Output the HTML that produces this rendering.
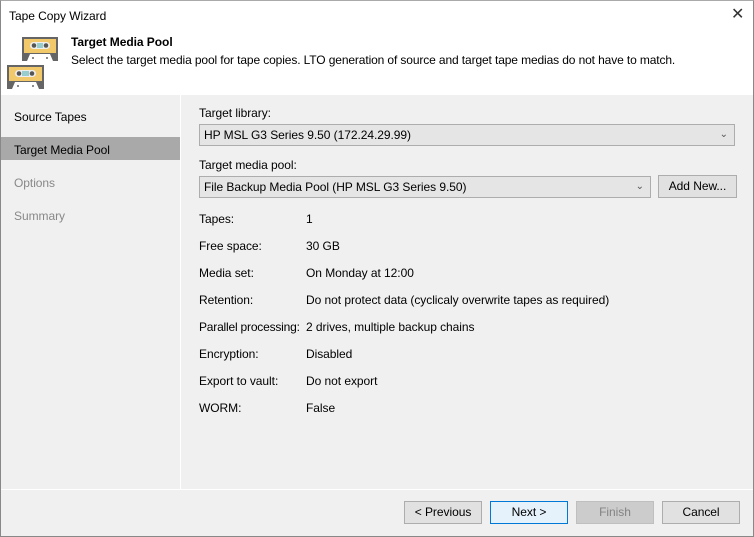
<!DOCTYPE html>
<html><head><style>
*{box-sizing:border-box;margin:0;padding:0}
body{width:754px;height:537px;font-family:"Liberation Sans",sans-serif;font-size:12px;letter-spacing:-0.05px;color:#000;background:#f0f0f0;position:relative;overflow:hidden}
.abs{position:absolute}
.win{left:0;top:0;width:754px;height:537px;border:1px solid #888;border-top:1px solid #aaa}
.combo{background:#e5e5e5;border:1px solid #adadad;height:22px;line-height:20px;padding-left:4px}
.combo .ar{position:absolute;right:6px;top:0;color:#555;font-size:10px}
.btn{background:#e1e1e1;border:1px solid #adadad;height:23px;width:78px;text-align:center;line-height:21px}
.lbl{left:199px}
.val{left:306px}
</style></head><body>
<div class="abs" style="left:0;top:0;width:754px;height:95px;background:#fff"></div>
<div class="abs" style="left:9px;top:9px">Tape Copy Wizard</div>
<div class="abs" style="left:731px;top:4px;font-size:16px;color:#333;font-weight:normal">✕</div>
<svg class="abs" style="left:22px;top:37px" width="36" height="25"><rect x="0" y="0" width="36" height="24" fill="#656565"/><rect x="2" y="2" width="32" height="14" fill="#f2c96a"/><rect x="8" y="5" width="20" height="7" rx="3.5" fill="#eee"/><circle cx="12" cy="8.5" r="2.3" fill="#555"/><circle cx="24" cy="8.5" r="2.3" fill="#555"/><rect x="15" y="6" width="6" height="5" fill="#9cc"/><polygon points="5,24 8,17 28,17 31,24" fill="#fff"/><circle cx="11" cy="21" r="1" fill="#666"/><circle cx="25" cy="21" r="1" fill="#666"/></svg>
<svg class="abs" style="left:7px;top:65px" width="37" height="25"><rect x="0" y="0" width="37" height="24" fill="#656565"/><rect x="2" y="2" width="33" height="14" fill="#f2c96a"/><rect x="8" y="5" width="21" height="7" rx="3.5" fill="#eee"/><circle cx="12" cy="8.5" r="2.3" fill="#555"/><circle cx="25" cy="8.5" r="2.3" fill="#555"/><rect x="15" y="6" width="7" height="5" fill="#9cc"/><polygon points="5,24 8,17 29,17 32,24" fill="#fff"/><circle cx="11" cy="21" r="1" fill="#666"/><circle cx="26" cy="21" r="1" fill="#666"/></svg>
<div class="abs" style="left:71px;top:35px;font-weight:bold">Target Media Pool</div>
<div class="abs" style="left:71px;top:53px;letter-spacing:-0.12px">Select the target media pool for tape copies. LTO generation of source and target tape medias do not have to match.</div>
<div class="abs" style="left:180px;top:95px;width:1px;height:394px;background:#fff"></div>
<div class="abs" style="left:14px;top:110px">Source Tapes</div>
<div class="abs" style="left:0;top:137px;width:180px;height:23px;background:#a9a9a9"></div>
<div class="abs" style="left:14px;top:143px">Target Media Pool</div>
<div class="abs" style="left:14px;top:176px;color:#888">Options</div>
<div class="abs" style="left:14px;top:209px;color:#888">Summary</div>
<div class="abs lbl" style="top:106px">Target library:</div>
<div class="abs combo" style="left:199px;top:124px;width:536px">HP MSL G3 Series 9.50 (172.24.29.99)<span class="ar">&#8964;</span></div>
<div class="abs lbl" style="top:158px">Target media pool:</div>
<div class="abs combo" style="left:199px;top:176px;width:452px">File Backup Media Pool (HP MSL G3 Series 9.50)<span class="ar">&#8964;</span></div>
<div class="abs btn" style="left:658px;top:175px;width:79px">Add New...</div>
<div class="abs lbl" style="top:212px">Tapes:</div><div class="abs val" style="top:212px">1</div>
<div class="abs lbl" style="top:239px">Free space:</div><div class="abs val" style="top:239px">30 GB</div>
<div class="abs lbl" style="top:266px">Media set:</div><div class="abs val" style="top:266px">On Monday at 12:00</div>
<div class="abs lbl" style="top:293px">Retention:</div><div class="abs val" style="top:293px">Do not protect data (cyclicaly overwrite tapes as required)</div>
<div class="abs lbl" style="top:320px;letter-spacing:-0.2px">Parallel processing:</div><div class="abs val" style="top:320px">2 drives, multiple backup chains</div>
<div class="abs lbl" style="top:347px">Encryption:</div><div class="abs val" style="top:347px">Disabled</div>
<div class="abs lbl" style="top:374px">Export to vault:</div><div class="abs val" style="top:374px">Do not export</div>
<div class="abs lbl" style="top:401px">WORM:</div><div class="abs val" style="top:401px">False</div>
<div class="abs" style="left:0;top:489px;width:754px;height:1px;background:#fff"></div>
<div class="abs btn" style="left:404px;top:501px">&lt; Previous</div>
<div class="abs btn" style="left:490px;top:501px;background:#e5f1fb;border-color:#0078d7">Next &gt;</div>
<div class="abs btn" style="left:576px;top:501px;background:#ccc;border-color:#bfbfbf;color:#838383">Finish</div>
<div class="abs btn" style="left:662px;top:501px">Cancel</div>
<div class="abs win"></div>
</body></html>
